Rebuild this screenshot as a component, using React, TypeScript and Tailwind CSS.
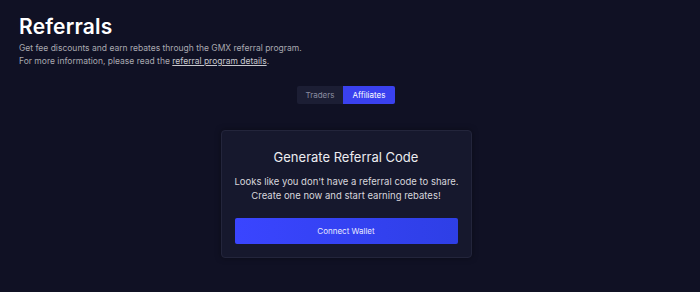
export default function App() {
  return (
    <div
      className="min-h-[292px] w-full bg-[#101124] text-white"
      style={{ fontFamily: "Inter, 'Liberation Sans', sans-serif" }}
    >
      <div className="px-[19px] pt-[14px]">
        {/* header */}
        <h1 className="text-[21px] font-semibold leading-[26px] tracking-[0.2px]">Referrals</h1>
        <div className="mt-[2px] text-[8.5px] leading-[13px] text-[#a9a9b0]">
          <p>Get fee discounts and earn rebates through the GMX referral program.</p>
          <p>
            For more information, please read the{" "}
            <span className="underline text-[#c8c8ce]">referral program details</span>.
          </p>
        </div>

        {/* tabs */}
        <div className="mt-[18px] flex justify-center">
          <div className="ml-[-8px] flex overflow-hidden rounded-[2px] text-[8px]">
            <button className="h-[18px] w-[46px] bg-[#1c1e34] text-[#8a8ca0]">Traders</button>
            <button className="h-[18px] w-[52px] bg-[#3a41ef] text-white">Affiliates</button>
          </div>
        </div>

        {/* card */}
        <div className="mt-[26px] flex justify-center">
          <div className="ml-[-8px] w-[251px] rounded-[4px] border border-[#23253b] bg-[#16182d] px-[13px] pt-[17px] pb-[13px] text-center shadow-[0_0_6px_rgba(0,0,0,0.35)]">
            <h2 className="text-[13px] leading-[18px] text-[#ececf0]">Generate Referral Code</h2>
            <p className="mt-[9px] whitespace-nowrap text-[9.5px] leading-[14px] text-[#d6d6dc]">
              Looks like you don't have a referral code to share.
              <br />
              Create one now and start earning rebates!
            </p>
            <button className="mt-[15px] h-[26px] w-full rounded-[2px] bg-gradient-to-r from-[#3a45ff] to-[#2e3fe6] text-[8px] text-[#e8e9ff]">
              Connect Wallet
            </button>
          </div>
        </div>
      </div>
    </div>
  );
}
